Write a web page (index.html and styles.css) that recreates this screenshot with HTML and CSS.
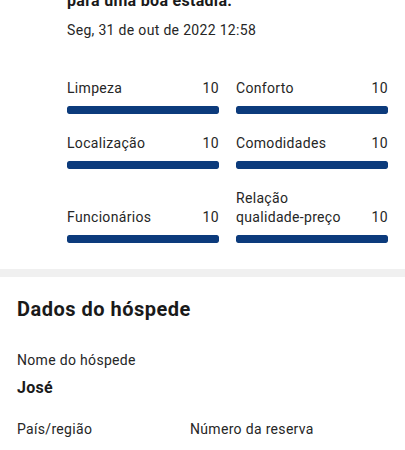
FILE: index.html
```html
<!DOCTYPE html>
<html lang="pt">
<head>
<meta charset="utf-8">
<link rel="stylesheet" href="styles.css">
</head>
<body>
<section class="review">
  <h2 class="review-title">para uma boa estadia.</h2>
  <p class="review-date">Seg, 31 de out de 2022 12:58</p>
  <div class="scores">
    <div class="score">
      <div class="score-head"><span class="score-label">Limpeza</span><span class="score-value">10</span></div>
      <div class="bar"><div class="bar-fill" style="width:100%"></div></div>
    </div>
    <div class="score">
      <div class="score-head"><span class="score-label">Conforto</span><span class="score-value">10</span></div>
      <div class="bar"><div class="bar-fill" style="width:100%"></div></div>
    </div>
    <div class="score">
      <div class="score-head"><span class="score-label">Localização</span><span class="score-value">10</span></div>
      <div class="bar"><div class="bar-fill" style="width:100%"></div></div>
    </div>
    <div class="score">
      <div class="score-head"><span class="score-label">Comodidades</span><span class="score-value">10</span></div>
      <div class="bar"><div class="bar-fill" style="width:100%"></div></div>
    </div>
    <div class="score">
      <div class="score-head"><span class="score-label">Funcionários</span><span class="score-value">10</span></div>
      <div class="bar"><div class="bar-fill" style="width:100%"></div></div>
    </div>
    <div class="score">
      <div class="score-head"><span class="score-label">Relação<br>qualidade-preço</span><span class="score-value">10</span></div>
      <div class="bar"><div class="bar-fill" style="width:100%"></div></div>
    </div>
  </div>
</section>
<div class="divider"></div>
<section class="guest">
  <h2 class="guest-title">Dados do hóspede</h2>
  <div class="field">
    <div class="field-label">Nome do hóspede</div>
    <div class="field-value">José</div>
  </div>
  <div class="field-row">
    <div class="field">
      <div class="field-label">País/região</div>
      <div class="field-value">Portugal</div>
    </div>
    <div class="field">
      <div class="field-label">Número da reserva</div>
      <div class="field-value">3456789012</div>
    </div>
  </div>
</section>
</body>
</html>
```
FILE: styles.css
```css
* { box-sizing: border-box; }
html, body { margin: 0; padding: 0; background: #fff; }
body {
  font-family: Roboto, "Noto Sans", "Liberation Sans", sans-serif;
  color: #1a1a1a;
  overflow: hidden;
}
.review {
  padding: 0 17px 26px 67px;
}
.review-title {
  margin: -10px 0 0;
  font-size: 16px;
  line-height: 22px;
  font-weight: 700;
  letter-spacing: 0.3px;
  color: #1a1a1a;
}
.review-date {
  margin: 8px 0 0;
  font-size: 14px;
  line-height: 20px;
  letter-spacing: 0.32px;
  color: #262626;
}
.scores {
  margin-top: 39px;
  display: grid;
  grid-template-columns: 1fr 1fr;
  column-gap: 17px;
  row-gap: 20px;
  align-items: end;
}
.score-head {
  display: flex;
  justify-content: space-between;
  align-items: flex-end;
  font-size: 14px;
  line-height: 19px;
  letter-spacing: 0.32px;
  color: #262626;
}
.bar {
  margin-top: 8px;
  height: 8px;
  border-radius: 2px;
  background: #e6e6e6;
  overflow: hidden;
}
.bar-fill {
  height: 100%;
  background: #0c3b7c;
  border-radius: 2px;
}
.divider {
  height: 8px;
  background: #f0f0f0;
}
.guest {
  padding: 18px 17px 0;
}
.guest-title {
  margin: 0;
  font-size: 20px;
  line-height: 28px;
  font-weight: 700;
  letter-spacing: 0.5px;
  color: #1a1a1a;
}
.guest .field { margin-top: 27px; }
.field-label {
  font-size: 14px;
  line-height: 20px;
  letter-spacing: 0.32px;
  color: #262626;
}
.field-value {
  margin-top: 8px;
  font-size: 16px;
  line-height: 20px;
  font-weight: 700;
  letter-spacing: 0.3px;
  color: #1a1a1a;
}
.field-row {
  display: grid;
  grid-template-columns: 173px 1fr;
}
.guest .field-row .field { margin-top: 21px; }
```
